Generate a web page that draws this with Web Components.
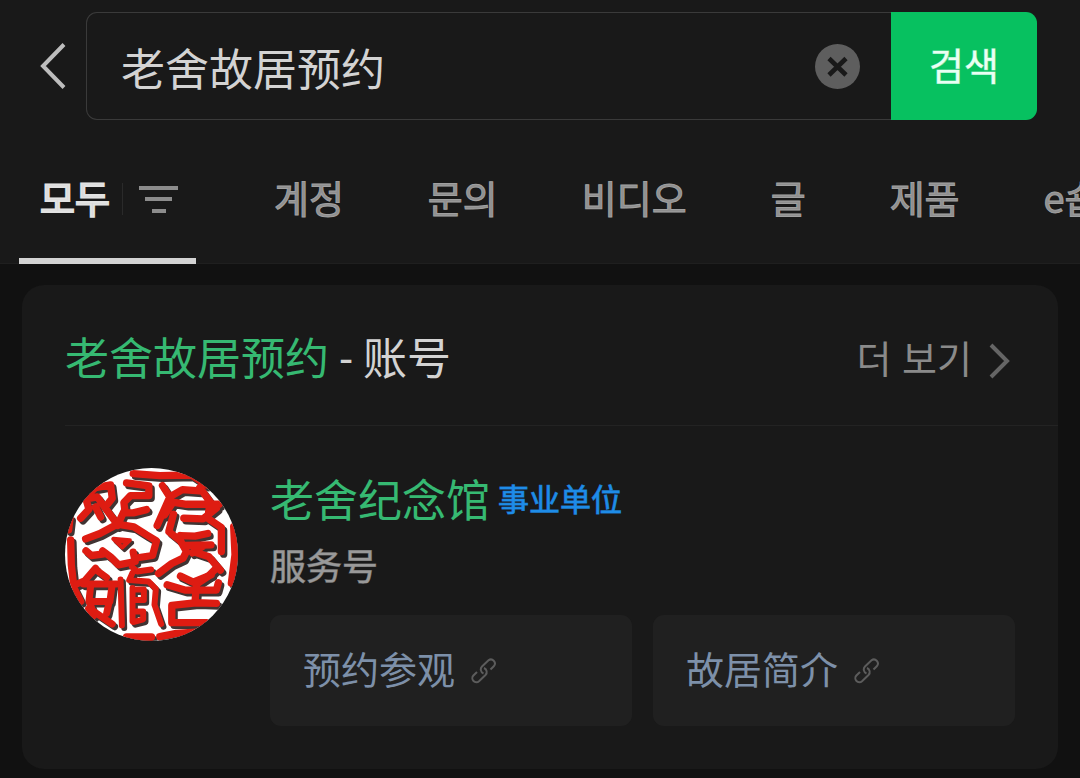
<!DOCTYPE html>
<html lang="ko">
<head>
<meta charset="utf-8">
<meta name="viewport" content="width=device-width, initial-scale=1">
<title>검색</title>
<style>
  body {
    margin: 0;
    min-height: 100vh;
    background: #111;
    color: #d3d3d3;
    font-family: "Noto Sans CJK KR", "Noto Sans CJK SC", sans-serif;
    overflow-x: hidden;
  }
  main {
    padding: 21px 22px 9px;
  }
</style>
</head>
<body>
<search-header>
  <search-bar value="老舍故居预约" action="검색"></search-bar>
  <search-tabs>
    <search-tab active>모두</search-tab>
    <search-tab>계정</search-tab>
    <search-tab>문의</search-tab>
    <search-tab>비디오</search-tab>
    <search-tab>글</search-tab>
    <search-tab>제품</search-tab>
    <search-tab>e숍</search-tab>
  </search-tabs>
</search-header>
<main>
  <result-card more="더 보기">
    <span slot="keyword" lang="zh-CN">老舍故居预约</span>
    <span slot="kind" lang="zh-CN">- 账号</span>
    <account-item name="老舍纪念馆" badge="事业单位" type="服务号">
      <seal-avatar slot="avatar"></seal-avatar>
      <quick-link>预约参观</quick-link>
      <quick-link>故居简介</quick-link>
    </account-item>
  </result-card>
</main>

<script>
class SearchHeader extends HTMLElement {
  connectedCallback() {
    if (this.shadowRoot) return;
    const root = this.attachShadow({ mode: "open" });
    root.innerHTML = `
      <style>
        :host {
          display: block;
          padding-top: 12px;
          background: #191919;
          box-shadow: inset 0 -1px #1f1f1f;
        }
      </style>
      <header><slot></slot></header>
    `;
  }
}

class SearchBar extends HTMLElement {
  connectedCallback() {
    if (this.shadowRoot) return;
    const value = this.getAttribute("value") || "";
    const action = this.getAttribute("action") || "";
    const root = this.attachShadow({ mode: "open" });
    root.innerHTML = `
      <style>
        :host {
          display: block;
          padding: 0 43px 0 19px;
        }
        form {
          display: flex;
          height: 108px;
          margin: 0;
        }
        button {
          padding: 0;
          border: 0;
          background: none;
          font: inherit;
          cursor: pointer;
        }
        svg {
          display: block;
        }
        .back {
          display: grid;
          place-items: center;
          width: 67px;
        }
        .field {
          flex: 1;
          display: flex;
          align-items: center;
          min-width: 0;
          box-sizing: border-box;
          padding: 0 31px 0 34px;
          border: 1px solid #3a3a3a;
          border-right: 0;
          border-radius: 11px 0 0 11px;
        }
        input {
          flex: 1;
          min-width: 0;
          padding: 2px 0 0;
          border: 0;
          outline: 0;
          background: none;
          color: #d3d3d3;
          font: 44px/64px "Noto Sans CJK SC", sans-serif;
        }
        .submit {
          width: 146px;
          padding-bottom: 4px;
          border-radius: 0 11px 11px 0;
          background: #07c160;
          color: #e9fff3;
          font-size: 38px;
          line-height: 56px;
          -webkit-text-stroke: 1px rgba(233, 255, 243, 0.5);
        }
      </style>
      <form role="search" onsubmit="return false">
        <button class="back" type="button" aria-label="뒤로">
          <svg width="26" height="46" viewBox="0 0 26 46" fill="none" stroke="#bdbdbd" stroke-width="4"><path d="M24 1.500L3 23l21 21.500"/></svg>
        </button>
        <div class="field">
          <input type="text" lang="zh-CN" aria-label="${action}" value="${value}">
          <button class="clear" type="button" aria-label="지우기">
            <svg width="45" height="45" viewBox="0 0 45 45"><circle cx="22.500" cy="22.500" r="22.500" fill="#5e5e5e"/><path d="M14 14.500l17 16.500M31 14.500L14 31" stroke="#191919" stroke-width="4.600"/></svg>
          </button>
        </div>
        <button class="submit" type="submit">${action}</button>
      </form>
    `;
    const input = root.querySelector("input");
    root.querySelector(".clear").addEventListener("click", () => {
      input.value = "";
      input.focus();
    });
  }
}

class SearchTabs extends HTMLElement {
  connectedCallback() {
    if (this.shadowRoot) return;
    const root = this.attachShadow({ mode: "open" });
    root.innerHTML = `
      <style>
        :host {
          display: block;
          overflow: hidden;
        }
        nav {
          display: flex;
          padding-left: 19px;
        }
      </style>
      <nav><slot></slot></nav>
    `;
  }
}

class SearchTab extends HTMLElement {
  connectedCallback() {
    if (this.shadowRoot) return;
    const active = this.hasAttribute("active");
    const root = this.attachShadow({ mode: "open" });
    root.innerHTML = `
      <style>
        :host {
          display: block;
          flex: none;
        }
        :host([active]) {
          margin-right: 36px;
        }
        a {
          display: flex;
          align-items: center;
          height: 144px;
          box-sizing: border-box;
          padding: 10px 42px 0;
          color: #8f8f8f;
          font-size: 38px;
          line-height: 56px;
          white-space: nowrap;
          text-decoration: none;
          -webkit-text-stroke: 1px #a0a0a0;
        }
        :host([active]) a {
          padding: 16px 18px 0 21px;
          border-bottom: 6px solid #d3d3d3;
          color: #d8d8d8;
          -webkit-text-stroke: 2px #e2e2e2;
        }
        .filter {
          display: flex;
          margin: 4px 0 0 12px;
          padding-left: 16px;
          border-left: 1px solid #2a2a2a;
        }
      </style>
      <a href="#"${active ? ' aria-current="page"' : ""}>
        <slot></slot>
        ${active ? `<span class="filter"><svg width="39" height="32" viewBox="0 0 39 32" fill="#8c8c8c"><path d="M0 3h39v4H0zM6 14h27v4H6zM13 26h14v4H13z"/></svg></span>` : ""}
      </a>
    `;
  }
}

class ResultCard extends HTMLElement {
  connectedCallback() {
    if (this.shadowRoot) return;
    const more = this.getAttribute("more") || "";
    const root = this.attachShadow({ mode: "open" });
    root.innerHTML = `
      <style>
        :host {
          display: block;
          padding-left: 43px;
          border-radius: 22px;
          background: #191919;
        }
        .head {
          display: flex;
          align-items: center;
          justify-content: space-between;
          height: 140px;
          padding-right: 48px;
          border-bottom: 1px solid #232323;
        }
        h2 {
          margin: 0;
          padding-top: 10px;
          font: 44px/64px Roboto, "Noto Sans CJK SC", sans-serif;
        }
        .keyword {
          color: #36b972;
        }
        a {
          display: flex;
          align-items: center;
          gap: 17px;
          padding-top: 12px;
          color: #8a8a8a;
          font-size: 38px;
          line-height: 56px;
          text-decoration: none;
        }
        .more {
          padding-bottom: 8px;
        }
        .body {
          padding: 42px 43px 43px 0;
        }
      </style>
      <section>
        <div class="head">
          <h2><span class="keyword"><slot name="keyword"></slot></span> <slot name="kind"></slot></h2>
          <a href="#"><span class="more">${more}</span><svg width="21" height="36" viewBox="0 0 21 36" fill="none" stroke="#656565" stroke-width="4"><path d="M2 2l16 16L2 34"/></svg></a>
        </div>
        <div class="body"><slot></slot></div>
      </section>
    `;
  }
}

class AccountItem extends HTMLElement {
  connectedCallback() {
    if (this.shadowRoot) return;
    const root = this.attachShadow({ mode: "open" });
    root.innerHTML = `
      <style>
        :host {
          display: flex;
          align-items: flex-start;
          gap: 32px;
          font-family: "Noto Sans CJK SC", sans-serif;
        }
        .info {
          flex: 1;
          min-width: 0;
        }
        .title {
          display: flex;
          align-items: center;
          gap: 8px;
        }
        h3 {
          margin: 0;
          color: #36b972;
          font-size: 44px;
          font-weight: 400;
          line-height: 60px;
        }
        .badge {
          color: #1e8ce8;
          font-size: 31px;
          line-height: 44px;
          -webkit-text-stroke: 1px rgba(30, 140, 232, 0.8);
        }
        p {
          margin: 8px 0 23px;
          color: #999;
          font-size: 36px;
          line-height: 56px;
          -webkit-text-stroke: 1px rgba(153, 153, 153, 0.6);
        }
        .links {
          display: grid;
          grid-template-columns: 1fr 1fr;
          gap: 21px;
        }
      </style>
      <slot name="avatar"></slot>
      <div class="info" lang="zh-CN">
        <div class="title">
          <h3>${this.getAttribute("name") || ""}</h3>
          <span class="badge">${this.getAttribute("badge") || ""}</span>
        </div>
        <p>${this.getAttribute("type") || ""}</p>
        <div class="links"><slot></slot></div>
      </div>
    `;
  }
}

class QuickLink extends HTMLElement {
  connectedCallback() {
    if (this.shadowRoot) return;
    const root = this.attachShadow({ mode: "open" });
    root.innerHTML = `
      <style>
        :host {
          display: block;
        }
        a {
          display: flex;
          align-items: center;
          gap: 16px;
          height: 111px;
          box-sizing: border-box;
          padding: 0 33px;
          border-radius: 11px;
          background: #202020;
          color: #7d90a9;
          font: 38px/56px "Noto Sans CJK SC", sans-serif;
          text-decoration: none;
        }
        .label {
          padding-bottom: 6px;
        }
      </style>
      <a href="#">
        <span class="label"><slot></slot></span>
        <svg width="26" height="26" viewBox="0 0 26 26" fill="none" stroke="#5c5c5c" stroke-width="2"><path d="M19.500 11.500L23 8a4 4 0 0 0-5.500-5.700L11 8.500a4.300 4.300 0 0 0 1.500 7"/><path d="M6 14l-3.600 3.500A4 4 0 0 0 8 23.200l6.500-6.200A4.300 4.300 0 0 0 13 10"/></svg>
      </a>
    `;
  }
}

// round carved seal: the same strokes twice, dark and shifted below the red
class SealAvatar extends HTMLElement {
  connectedCallback() {
    if (this.shadowRoot) return;
    const root = this.attachShadow({ mode: "open" });
    root.innerHTML = `
      <style>
        :host {
          display: block;
          flex: none;
          width: 173px;
          height: 173px;
          border-radius: 50%;
          overflow: hidden;
          background: #fff;
        }
        svg {
          display: block;
          width: 100%;
          height: 100%;
        }
      </style>
      <svg viewBox="45 39 520 520" fill="none" stroke-linejoin="round" stroke-linecap="round" aria-hidden="true">
        <defs>
          <g id="seal">
            <path stroke-width="22" d="M250 56L330 62L425 60L470 90M552 215L556 300L545 385M60 190L56 225M62 255L64 330L72 400L92 440M230 547H305M330 546L380 536L450 532"/>
            <path stroke-width="22" d="M104 128L137 98L182 90L187 130L165 158L142 126L108 132L117 163L92 190M137 156L152 186M165 158L200 205"/>
            <path stroke-width="22" d="M230 84L297 93V122H242L222 143L226 174L250 174L290 164M222 170L202 212"/>
            <path stroke-width="22" d="M107 252L150 236L202 208L252 216L290 240L320 258L308 302L268 308M108 288L124 302L158 298M158 288L182 306L206 330L256 320L250 292"/>
            <path stroke-width="12" d="M190 252L240 256L217 278ZM204 260H226"/>
            <path stroke-width="21" d="M137 340L104 378L80 388M137 344L170 368M100 388H200M122 394L117 440L180 440L186 396M118 440L128 468L187 508M178 440L170 476M130 484L116 462"/>
            <path stroke-width="18" d="M212 374L216 512M246 336L262 350L304 344M248 354L238 376L296 380L318 402L314 450L334 508M248 400V500M248 404H282V436H250M248 470H280V494L250 502"/>
            <path stroke-width="22" d="M338 92L360 126L322 212M360 126L398 104L450 108M360 140L410 148H508M450 98L482 142M402 190L460 192L500 160M480 150L474 190L515 218V290M370 142L344 180"/>
            <path stroke-width="22" d="M371 178L357 230L392 258L410 290L400 310L366 326L326 356M392 242L436 244L474 236M404 272L484 270M460 274L428 294M436 292L478 306L512 346M500 340L476 364L440 388"/>
            <path stroke-width="22" d="M352 390L405 406H500L506 384M392 364L430 382L484 360M440 390L436 440M500 446L440 444L366 452V504H470"/>
          </g>
        </defs>
        <use href="#seal" x="7" y="8" stroke="#403433"/>
        <use href="#seal" stroke="#de1c12"/>
      </svg>
    `;
  }
}

customElements.define("search-header", SearchHeader);
customElements.define("search-bar", SearchBar);
customElements.define("search-tabs", SearchTabs);
customElements.define("search-tab", SearchTab);
customElements.define("result-card", ResultCard);
customElements.define("account-item", AccountItem);
customElements.define("quick-link", QuickLink);
customElements.define("seal-avatar", SealAvatar);
</script>
</body>
</html>
